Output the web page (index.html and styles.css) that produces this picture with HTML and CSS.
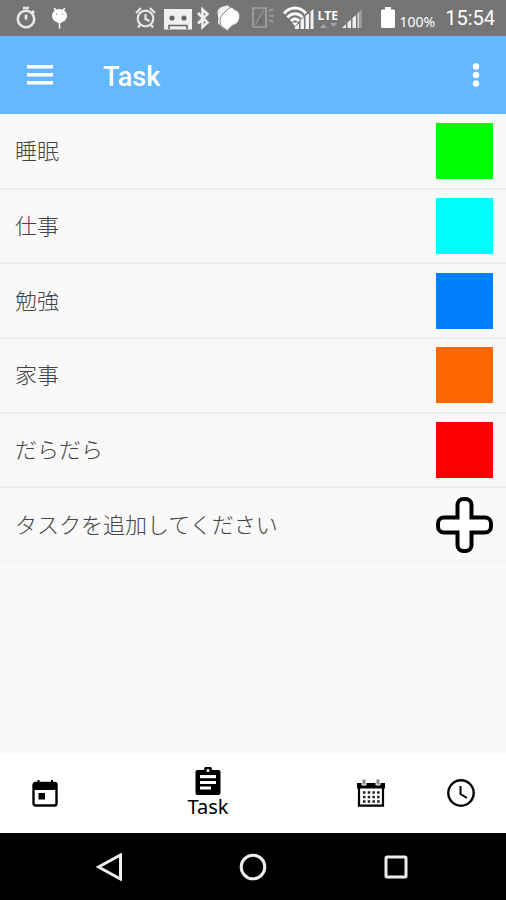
FILE: index.html
```html
<!DOCTYPE html>
<html lang="ja">
<head>
  <meta charset="UTF-8">
  <meta name="viewport" content="width=device-width, initial-scale=1">
  <title>Task</title>
  <link rel="stylesheet" href="styles.css">
</head>
<body>

<div class="status-bar">
  <div class="status-group">
    <!-- stopwatch -->
    <svg width="36" height="36" viewBox="0 0 36 36" fill="none" stroke="#e8e8e8" stroke-width="2.6">
      <circle cx="18" cy="19" r="8.2"/>
      <path d="M15 8h6M18 14.5v5M24 11l2 2"/>
    </svg>
    <!-- android -->
    <svg width="32" height="36" viewBox="0 0 32 36" fill="#fff">
      <path d="M10.500 8.500l2 3M20.500 8.500l-2 3M15.500 21v7" stroke="#fff" stroke-width="1.600" stroke-linecap="round"/>
      <path d="M8 15.500a7.500 6.500 0 0 1 15 0c0 4-3 6.800-7.500 7.500-4.500-.7-7.500-3.500-7.500-7.500z"/>
      <circle cx="12.500" cy="14" r=".8" fill="#999"/>
      <circle cx="18.500" cy="14" r=".8" fill="#999"/>
    </svg>
  </div>

  <div class="status-group">
    <!-- alarm -->
    <svg width="28" height="36" viewBox="0 0 28 36" fill="none" stroke="#e8e8e8" stroke-width="2.200">
      <circle cx="13.500" cy="18.500" r="7.800"/>
      <path d="M13.500 14v5l4 2M4 13l5-5M23 13l-5-5M8 25l-2 2.500M19 25l2 2.500"/>
    </svg>
    <!-- cassette -->
    <svg width="34" height="36" viewBox="0 0 34 36">
      <path d="M4 9h28v20.500H4z" fill="#f0f0f0"/>
      <circle cx="12" cy="18" r="2.600" fill="#666"/>
      <circle cx="24" cy="18" r="2.600" fill="#666"/>
      <path d="M9 29v-3.500h18V29" fill="none" stroke="#666" stroke-width="1.600"/>
    </svg>
    <!-- bluetooth -->
    <svg width="18" height="36" viewBox="0 0 18 36" fill="none" stroke="#eee" stroke-width="2.600">
      <path d="M4 13l9.500 9.500-5 4.500V9.500l5 4.500L4 23.500"/>
    </svg>
    <!-- mittens -->
    <svg width="34" height="36" viewBox="0 0 34 36">
      <path d="M5.500 12c0-2 1.500-4 4-5l5-1.500c2.500-.5 4 1.500 3.500 4L8 25c-1.500-.5-2.500-2-2-4 1-1-.5-6-.5-9z" fill="#eee"/>
      <path d="M9 26c-1.500-5-1-9 2-12l5-5c3-2.500 5.500-1.500 6.500 1 3 0 5.500 3 5 7-.5 5-3 7.500-7.500 8.500L15 31z" fill="#fff" stroke="#8a8a8a" stroke-width="1"/>
      <path d="M8 25.500l7 4.500" fill="none" stroke="#999" stroke-width="1"/>
    </svg>
    <!-- phone with light -->
    <svg width="34" height="36" viewBox="0 0 34 36" fill="none" stroke="#a3a3a3" stroke-width="1.600">
      <path d="M7 8h13v19H7z"/>
      <path d="M9 25l9-15" stroke="#8c8c8c"/>
      <path d="M11 24l6-10v10z" fill="#6a6a6a" stroke="none"/>
      <path d="M23 11l4-2M23 16h5M23 20l4 2"/>
    </svg>
    <!-- wifi -->
    <svg width="37" height="36" viewBox="0 0 37 36">
      <g fill="none" stroke="#fff" stroke-width="3">
        <path d="M4 13.500c6-7.300 16-7.300 22 0"/>
        <path d="M7.500 17.500c4-5 11-5 15 0"/>
        <path d="M11 21c2.500-3 5.500-3 8 0"/>
      </g>
      <path d="M12 22.500h6L15 26z" fill="#fff"/>
      <path d="M15 29v-2.500l4-3V29zM20.500 29v-9l3.500-2.500V29zM25.500 29V15.500l3.500-2V29zM30.500 29V11.500l3-2.500v20z" fill="#f2f2f2"/>
    </svg>
    <div class="network">
      <span>LTE</span>
      <svg width="20" height="5" viewBox="0 0 20 5" fill="#a5a5a5">
        <path d="M2 5l3.500-4L9 5zM12 0h7l-3.500 4z"/>
      </svg>
    </div>
    <!-- signal -->
    <svg width="38" height="36" viewBox="0 0 38 36">
      <path d="M2 28l4-4v4zM7.500 28v-5.500l3.500-3V28zM12.500 28V18l3.500-3v13z" fill="#eee"/>
      <path d="M17.500 28V13.500l1.500-1.500v16z" fill="#d8d8d8"/>
      <path d="M19 28V12l3-3v19z" fill="#999"/>
    </svg>
    <!-- battery -->
    <svg width="20" height="36" viewBox="0 0 20 36" fill="#fff">
      <path d="M7 7h6v2.500h2.500a1.500 1.500 0 0 1 1.500 1.500v15.500a1.500 1.500 0 0 1-1.500 1.500h-11A1.500 1.500 0 0 1 3 26.500V11a1.500 1.500 0 0 1 1.500-1.500H7z"/>
    </svg>
    <span class="battery-level">100%</span>
    <span class="clock">15:54</span>
  </div>
</div>

<header class="app-bar">
  <button class="icon-button" type="button" aria-label="メニュー">
    <svg width="28" height="28" viewBox="0 0 28 28" fill="#fff">
      <path d="M1 4h26v3.500H1zM1 12h26v3.500H1zM1 20h26v3.500H1z"/>
    </svg>
  </button>
  <h1>Task</h1>
  <button class="icon-button" type="button" aria-label="その他">
    <svg width="8" height="28" viewBox="0 0 8 28" fill="#fff">
      <circle cx="4" cy="5.500" r="3.200"/>
      <circle cx="4" cy="14" r="3.200"/>
      <circle cx="4" cy="22.500" r="3.200"/>
    </svg>
  </button>
</header>

<main>
  <ul class="task-list">
    <li><span class="name">睡眠</span><span class="swatch green"></span></li>
    <li><span class="name">仕事</span><span class="swatch cyan"></span></li>
    <li><span class="name">勉強</span><span class="swatch blue"></span></li>
    <li><span class="name">家事</span><span class="swatch orange"></span></li>
    <li><span class="name">だらだら</span><span class="swatch red"></span></li>
    <li>
      <span class="name">タスクを追加してください</span>
      <button class="add-button" type="button" aria-label="追加">
        <svg width="57" height="56" viewBox="0 0 57 56" fill="#fff" stroke="#000" stroke-width="4">
          <path d="M21.500 8a6 6 0 0 1 6-6h2a6 6 0 0 1 6 6v12.500H49a6 6 0 0 1 6 6v3a6 6 0 0 1-6 6H35.500V48a6 6 0 0 1-6 6h-2a6 6 0 0 1-6-6V35.500H8a6 6 0 0 1-6-6v-3a6 6 0 0 1 6-6h13.500z"/>
        </svg>
      </button>
    </li>
  </ul>
</main>

<nav class="tabs">
  <a href="#today" aria-label="今日">
    <svg width="26" height="28" viewBox="0 0 26 28">
      <path d="M2 4h22v7H2z"/>
      <rect x="1.500" y="4" width="23" height="22.500" rx="2" fill="none" stroke="#000" stroke-width="2.400"/>
      <path d="M5.500 1h2v4h-2zM19 1h2v4h-2zM6.500 14h6.500v6.500H6.500z"/>
    </svg>
  </a>
  <a class="active" href="#task">
    <svg width="26" height="28" viewBox="0 0 26 28">
      <path d="M2.500 3H9a4 4 0 0 1 8 0h6.500a2 2 0 0 1 2 2v21a2 2 0 0 1-2 2h-21a2 2 0 0 1-2-2V5a2 2 0 0 1 2-2z"/>
      <circle cx="13" cy="3.500" r="1.500" fill="#fff"/>
      <path d="M5 8h16v3.200H5zM5 14h16v3H5zM5 19.500h11v3H5z" fill="#fff"/>
    </svg>
    <span>Task</span>
  </a>
  <a href="#calendar" aria-label="カレンダー">
    <svg width="28" height="28" viewBox="0 0 28 28">
      <path d="M0 4h28v5.500H0z"/>
      <path d="M2 8v18.700h24V8" fill="none" stroke="#000" stroke-width="2.200"/>
      <path d="M5 0h4v6H5zM19 0h4v6h-4z" fill="#888" stroke="#fff" stroke-width="1"/>
      <path d="M6 13.500h17M6 18h17M6 22.500h17" stroke="#222" stroke-width="2.500" stroke-dasharray="2.500 2.200"/>
    </svg>
  </a>
  <a href="#history" aria-label="履歴">
    <svg width="28" height="28" viewBox="0 0 28 28" fill="none" stroke="#000">
      <circle cx="14" cy="14" r="12.700" stroke-width="2.400"/>
      <path d="M13.500 7v8l6.500 4" stroke-width="2"/>
    </svg>
  </a>
</nav>

<div class="system-nav">
  <button type="button" aria-label="戻る">
    <svg width="28" height="28" viewBox="0 0 28 28"><path d="M2.500 14L24.500 2v24z"/></svg>
  </button>
  <button type="button" aria-label="ホーム">
    <svg width="28" height="28" viewBox="0 0 28 28"><circle cx="14" cy="14" r="11.800"/></svg>
  </button>
  <button type="button" aria-label="アプリ履歴">
    <svg width="28" height="28" viewBox="0 0 28 28"><rect x="4" y="4" width="20" height="20" rx="1"/></svg>
  </button>
</div>

</body>
</html>
```

FILE: styles.css
```css
* { box-sizing: border-box; }
body {
  display: flex;
  flex-direction: column;
  min-height: 100vh;
  margin: 0;
  background: #f9f9f9;
  font-family: Roboto, "Noto Sans CJK JP", sans-serif;
}
svg { display: block; }
button { padding: 0; border: 0; background: none; }

.status-bar {
  display: flex;
  justify-content: space-between;
  height: 36px;
  padding: 0 11px 0 8px;
  background: #757575;
  color: #fff;
}
.status-group { display: flex; align-items: center; }
.network { width: 23px; padding-left: 1px; }
.network span {
  display: block;
  font: bold 12px/14px "Open Sans", sans-serif;
}
.battery-level { margin: 8px 10px 0 2px; font: 14px/20px "Noto Sans", sans-serif; }
.clock { font-size: 20px; }

.app-bar {
  display: flex;
  align-items: center;
  height: 78px;
  padding: 0 26px;
  background: #63b8ff;
}
.app-bar h1 {
  flex: 1;
  margin: 0 0 0 49px;
  padding-top: 4px;
  color: #fff;
  font-size: 27px;
  font-weight: 500;
}

main { flex: 1; }
.task-list {
  display: grid;
  grid-template-rows: repeat(6, 1fr);
  height: 449px;
  margin: 0;
  padding: 1px 0 0;
  list-style: none;
}
.task-list li {
  display: flex;
  align-items: center;
  justify-content: space-between;
  padding: 0 13px 0 15px;
  border-bottom: 2px solid #eee;
  color: #444;
  font-size: 22px;
  font-weight: 300;
}
.task-list li:last-child { border-color: #f5f5f5; }
.name { padding-bottom: 4px; }
.swatch { width: 57px; height: 56px; }
.green { background: #0f0; }
.cyan { background: #0ff; }
.blue { background: #007fff; }
.orange { background: #ff6600; }
.red { background: #f00; }

.tabs { display: flex; height: 80px; background: #fff; }
.tabs a {
  display: flex;
  flex-direction: column;
  align-items: center;
  justify-content: center;
  width: 90px;
  color: #000;
  text-decoration: none;
}
.tabs .active { flex: 1; }
.tabs span { font: 20px/24px "Noto Sans", sans-serif; }

.system-nav {
  display: flex;
  height: 67px;
  padding: 0 38px;
  background: #000;
}
.system-nav button {
  display: flex;
  flex: 1;
  align-items: center;
  justify-content: center;
}
.system-nav svg { fill: none; stroke: #eee; stroke-width: 3; }
```
